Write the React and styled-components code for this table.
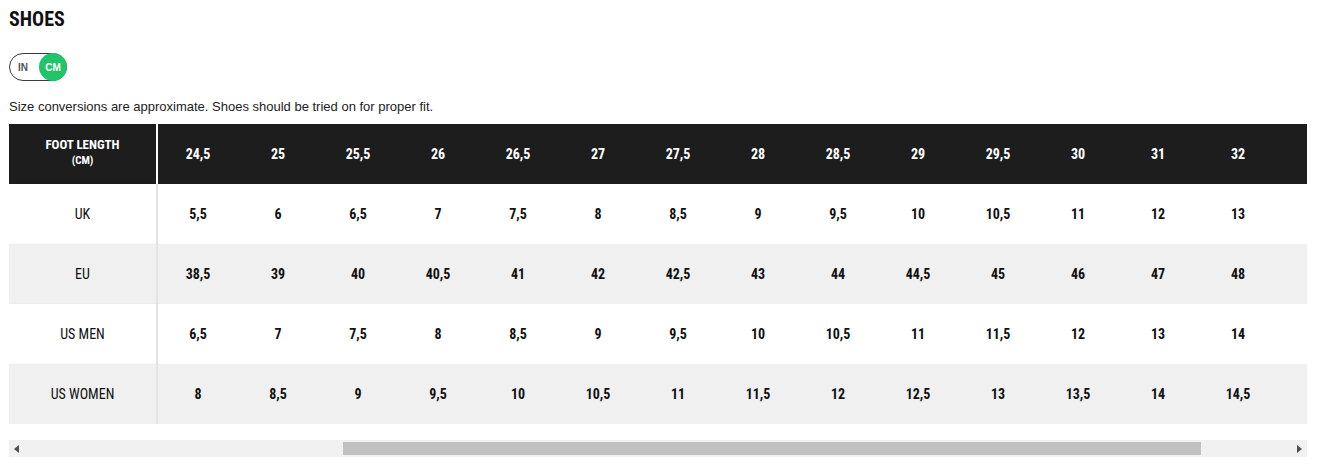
import React from "react";
import styled, { createGlobalStyle } from "styled-components";

const Global = createGlobalStyle`
  html, body { margin: 0; padding: 0; background: #fff; }
  body { font-family: "Liberation Sans", Arial, sans-serif; color: #111; }
`;

const narrow = `"Liberation Sans Narrow", "Roboto Condensed", "DejaVu Sans Condensed", "Liberation Sans", sans-serif`;

const Page = styled.div`
  padding: 9px 21px 0 9px;
  display: flex;
  flex-direction: column;
`;

const Title = styled.h2`
  margin: 0;
  font-family: ${narrow};
  font-stretch: condensed;
  font-weight: 700;
  font-size: 20px;
  line-height: 20px;
  color: #111;
`;

const Toggle = styled.div`
  margin-top: 24px;
  width: 58px;
  height: 28px;
  box-sizing: border-box;
  border: 1px solid #3a3a3a;
  border-radius: 14px;
  display: flex;
  align-items: center;
  padding: 0 0 0 8px;
`;

const Opt = styled.span`
  font-family: "Liberation Sans", Arial, sans-serif;
  font-weight: 700;
  font-size: 10px;
  color: ${(p) => (p.$active ? "#fff" : "#555")};
  background: ${(p) => (p.$active ? "#22c46a" : "transparent")};
  width: ${(p) => (p.$active ? "28px" : "auto")};
  height: ${(p) => (p.$active ? "28px" : "auto")};
  border-radius: 50%;
  display: flex;
  align-items: center;
  justify-content: center;
  margin-left: ${(p) => (p.$active ? "auto" : "0")};
  margin-right: ${(p) => (p.$active ? "-1px" : "0")};
`;

const Note = styled.p`
  margin: 18px 0 0;
  font-size: 13px;
  line-height: 16px;
  color: #222;
`;

const Viewport = styled.div`
  margin-top: 9px;
  width: 1298px;
  overflow: hidden;
`;

const Grid = styled.div`
  display: grid;
  grid-template-columns: 149px repeat(14, 80px) 1fr;
`;

const Row = styled.div`
  display: contents;
`;

const Cell = styled.div`
  height: 60px;
  display: flex;
  flex-direction: column;
  align-items: center;
  justify-content: center;
  font-family: ${narrow};
  font-stretch: condensed;
  background: ${(p) => (p.$head ? "#1d1d1d" : p.$alt ? "#f0f0f0" : "#fff")};
  color: ${(p) => (p.$head ? "#fff" : "#111")};
  font-weight: 700;
  font-size: 14px;
`;

const LabelCell = styled(Cell)`
  font-weight: ${(p) => (p.$head ? 700 : 400)};
  font-size: ${(p) => (p.$head ? "13px" : "14px")};
  border-right: 2px solid ${(p) => (p.$head ? "#fff" : "#e4e4e4")};
  box-shadow: ${(p) => (p.$head ? "none" : "1px 0 2px rgba(0,0,0,0.06)")};
  line-height: 16px;
  padding-bottom: ${(p) => (p.$head ? "4px" : "0")};
  box-sizing: border-box;
`;

const Sub = styled.span`
  font-size: 11px;
  line-height: 15px;
`;

const Scrollbar = styled.div`
  margin-top: 16px;
  width: 1298px;
  height: 17px;
  background: #f1f1f1;
  display: flex;
  align-items: center;
`;

const Arrow = styled.div`
  width: 16px;
  height: 17px;
  display: flex;
  align-items: center;
  justify-content: center;
  flex: none;
`;

const Track = styled.div`
  flex: 1;
  height: 17px;
  position: relative;
`;

const Thumb = styled.div`
  position: absolute;
  top: 2px;
  bottom: 2px;
  background: #c1c1c1;
`;

const headers = ["24,5", "25", "25,5", "26", "26,5", "27", "27,5", "28", "28,5", "29", "29,5", "30", "31", "32"];
const rows = [
  ["UK", ["5,5", "6", "6,5", "7", "7,5", "8", "8,5", "9", "9,5", "10", "10,5", "11", "12", "13"]],
  ["EU", ["38,5", "39", "40", "40,5", "41", "42", "42,5", "43", "44", "44,5", "45", "46", "47", "48"]],
  ["US MEN", ["6,5", "7", "7,5", "8", "8,5", "9", "9,5", "10", "10,5", "11", "11,5", "12", "13", "14"]],
  ["US WOMEN", ["8", "8,5", "9", "9,5", "10", "10,5", "11", "11,5", "12", "12,5", "13", "13,5", "14", "14,5"]],
];

export default function App() {
  return (
    <>
      <Global />
      <Page>
        <Title>SHOES</Title>
        <Toggle>
          <Opt>IN</Opt>
          <Opt $active>CM</Opt>
        </Toggle>
        <Note>Size conversions are approximate. Shoes should be tried on for proper fit.</Note>
        <Viewport>
          <Grid>
            <Row>
              <LabelCell $head>
                FOOT LENGTH
                <Sub>(CM)</Sub>
              </LabelCell>
              {headers.map((h) => (
                <Cell $head key={h}>{h}</Cell>
              ))}
              <Cell $head />
            </Row>
            {rows.map(([label, vals], i) => (
              <Row key={label}>
                <LabelCell $alt={i % 2 === 1}>{label}</LabelCell>
                {vals.map((v, j) => (
                  <Cell $alt={i % 2 === 1} key={j}>{v}</Cell>
                ))}
                <Cell $alt={i % 2 === 1} />
              </Row>
            ))}
          </Grid>
        </Viewport>
        <Scrollbar>
          <Arrow>
            <svg width="6" height="8" viewBox="0 0 6 8"><path d="M5 0 L0 4 L5 8 Z" fill="#505050" /></svg>
          </Arrow>
          <Track>
            <Thumb style={{ left: "318px", width: "858px" }} />
          </Track>
          <Arrow>
            <svg width="6" height="8" viewBox="0 0 6 8"><path d="M1 0 L6 4 L1 8 Z" fill="#505050" /></svg>
          </Arrow>
        </Scrollbar>
      </Page>
    </>
  );
}
